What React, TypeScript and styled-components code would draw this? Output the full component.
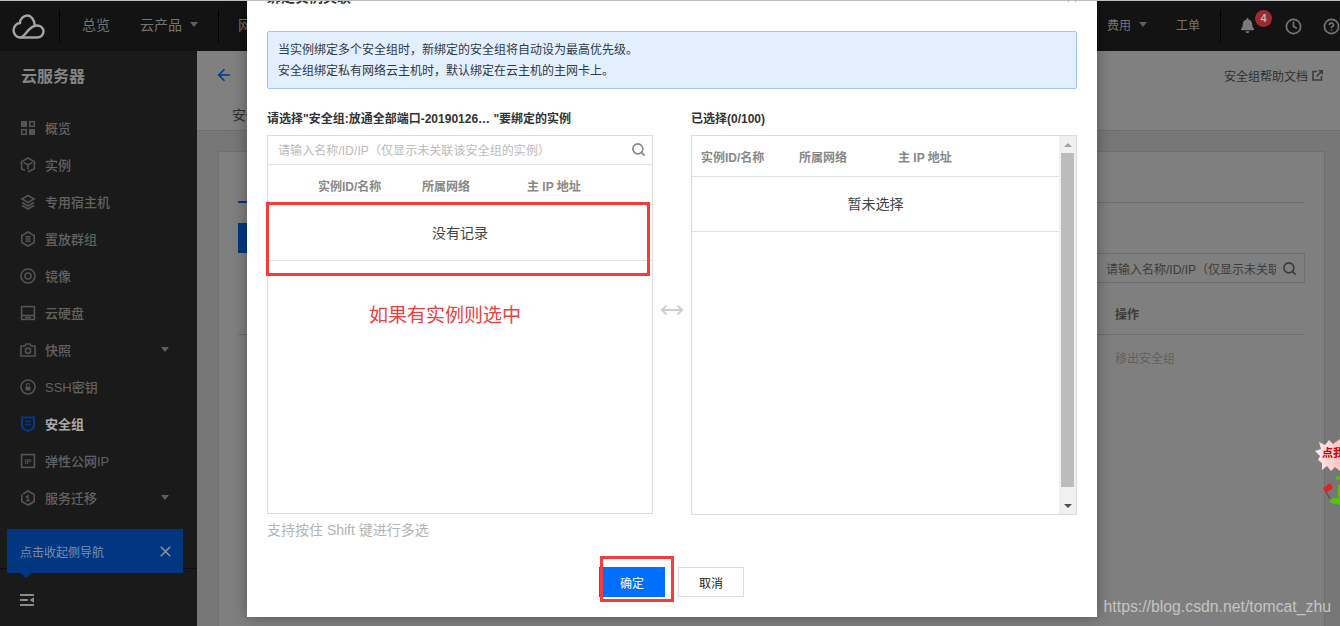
import React from "react";
import styled, { createGlobalStyle } from "styled-components";
import { Search, X, Clock, CircleHelp, ArrowLeft, MoveHorizontal } from "lucide-react";
import { FaBell } from "react-icons/fa";

const Global = createGlobalStyle`
  html, body { margin: 0; padding: 0; height: 100%; overflow: hidden; background: #777; }
  #root { height: 100%; }
  * { box-sizing: border-box; }
  body { font-family: "Liberation Sans", "Noto Sans CJK SC", sans-serif; font-size: 12px; }
`;

const Page = styled.div`
  position: relative;
  width: 1340px;
  height: 626px;
  overflow: hidden;
  display: flex;
  flex-direction: column;
  border-top: 1px solid #bdbdbd;
`;

/* ---------- top bar ---------- */
const TopBar = styled.header`
  height: 50px;
  flex: none;
  background: #131313;
  display: flex;
  align-items: center;
  color: #757575;
  padding-left: 12px;
`;
const Logo = styled.svg`
  width: 33px;
  height: 25px;
  flex: none;
  margin-right: 14px;
`;
const VRule = styled.span<{ $gap: number }>`
  width: 1px;
  height: 32px;
  background: #000;
  flex: none;
  margin-right: ${(p) => p.$gap}px;
`;
const NavItem = styled.span<{ $size?: number; $w: number }>`
  font-size: ${(p) => p.$size ?? 14}px;
  width: ${(p) => p.$w}px;
  flex: none;
  white-space: nowrap;
  display: flex;
  align-items: center;
  gap: 8px;
  padding-bottom: 4px;
`;
const Caret = styled.i`
  display: inline-block;
  width: 0;
  height: 0;
  border-left: 4px solid transparent;
  border-right: 4px solid transparent;
  border-top: 5px solid #5f5f5f;
`;
const BellWrap = styled.span`
  position: relative;
  display: flex;
  width: 15px;
  height: 17px;
  margin-right: 30px;
  color: #7a7a7a;
  flex: none;
`;
const Badge = styled.b`
  position: absolute;
  left: 15px;
  top: -8px;
  width: 17px;
  height: 17px;
  border-radius: 50%;
  background: #9c2a2e;
  color: #b5b5b5;
  font-size: 11px;
  font-weight: 700;
  line-height: 16px;
  text-align: center;
`;
const RoundIcon = styled.span`
  display: flex;
  color: #757575;
  flex: none;
  margin-right: 21px;
`;

/* ---------- body ---------- */
const Body = styled.div`
  flex: 1;
  display: flex;
  min-height: 0;
`;
const Sidebar = styled.aside`
  position: relative;
  width: 197px;
  flex: none;
  background: #1a1a1a;
  display: flex;
  flex-direction: column;
`;
const SideTitle = styled.div`
  height: 58px;
  padding: 16px 0 0 21px;
  font-size: 16px;
  line-height: 20px;
  font-weight: 700;
  color: #858585;
`;
const Menu = styled.nav`
  flex: 1;
`;
const MenuItem = styled.div<{ $active?: boolean }>`
  height: 37px;
  display: flex;
  align-items: center;
  padding: 0 28px 0 20px;
  font-size: 13px;
  font-weight: ${(p) => (p.$active ? 700 : 500)};
  color: ${(p) => (p.$active ? "#ababab" : "#626262")};
  svg.mi {
    width: 16px;
    height: 16px;
    flex: none;
    margin-right: 9px;
    color: ${(p) => (p.$active ? "#003a8c" : "#545454")};
  }
  span {
    flex: 1;
  }
`;
const SideFoot = styled.div`
  height: 58px;
  flex: none;
  border-top: 1px solid #0f0f0f;
  padding: 24px 0 0 20px;
  color: #8a8a8a;
  display: flex;
`;
const Tip = styled.div`
  position: absolute;
  left: 7px;
  top: 478px;
  width: 176px;
  height: 44px;
  background: #003780;
  color: #7f8ea3;
  display: flex;
  align-items: center;
  justify-content: space-between;
  padding: 0 9px 0 13px;
  font-size: 12px;
  &::after {
    content: "";
    position: absolute;
    left: 13px;
    bottom: -5px;
    border-left: 6px solid transparent;
    border-right: 6px solid transparent;
    border-top: 5px solid #003780;
  }
`;

/* ---------- main page behind the dialog ---------- */
const Main = styled.main`
  flex: 1;
  min-width: 0;
  background: #777;
  display: flex;
  flex-direction: column;
`;
const MainHead = styled.div`
  height: 80px;
  flex: none;
  background: #808080;
  border-bottom: 1px solid #6d6d6d;
  padding-left: 18px;
  color: #333;
`;
const TitleRow = styled.div`
  height: 48px;
  display: flex;
  align-items: center;
  justify-content: space-between;
  padding-right: 17px;
  color: #003a8c;
`;
const HelpLink = styled.span`
  font-size: 12px;
  color: #303030;
  display: flex;
  align-items: center;
  gap: 4px;
`;
const HeadTab = styled.div`
  font-size: 14px;
  color: #2f2f2f;
  padding-left: 17px;
  line-height: 20px;
  margin-top: 6px;
`;
const Card = styled.section`
  margin: 20px 15px 0 21px;
  flex: 1;
  background: #7f7f7f;
  border: solid #6f6f6f;
  border-width: 1px 1px 0 1px;
  padding: 0 19px;
`;
const CardTabs = styled.div`
  height: 51px;
  border-bottom: 1px solid #6d6d6d;
  position: relative;
`;
const CardTab = styled.i`
  position: absolute;
  left: 0;
  bottom: -1px;
  width: 90px;
  height: 2px;
  background: #003780;
`;
const Toolbar = styled.div`
  display: flex;
  justify-content: space-between;
  margin-top: 20px;
  height: 60px;
  align-items: flex-start;
`;
const PrimaryGhost = styled.div`
  width: 100px;
  height: 30px;
  background: #003780;
`;
const PageSearch = styled.div`
  width: 210px;
  height: 30px;
  margin-top: 30px;
  border: 1px solid #6d6d6d;
  padding: 0 7px 0 10px;
  display: flex;
  align-items: center;
  color: #3c3c3c;
  font-size: 12px;
  span {
    flex: 1;
    overflow: hidden;
    white-space: nowrap;
  }
  svg {
    flex: none;
    margin-left: 6px;
  }
`;
const PageTableHead = styled.div`
  height: 52px;
  border-bottom: 1px solid #6d6d6d;
  padding: 24px 0 0 877px;
  font-weight: 700;
  color: #3c3c3c;
  line-height: 16px;
`;
const PageTableRow = styled.div`
  padding: 16px 0 0 877px;
  color: #5f5f5f;
  line-height: 16px;
`;

/* ---------- dialog ---------- */
const Overlay = styled.div`
  position: absolute;
  inset: 0;
  padding-left: 247px;
`;
const Modal = styled.div`
  position: relative;
  width: 850px;
  height: 616px;
  background: #fff;
  box-shadow: 0 0 14px rgba(0, 0, 0, 0.35);
`;
const ModalClip = styled.div`
  position: absolute;
  inset: 0;
  overflow: hidden;
  padding: 0 20px;
`;
const ModalHead = styled.div`
  height: 30px;
  padding-bottom: 24px;
  display: flex;
  justify-content: space-between;
  align-items: flex-end;
  font-size: 14px;
  font-weight: 700;
  color: #333;
  line-height: 20px;
  svg {
    color: #888;
    margin-right: -2px;
    margin-bottom: 2px;
  }
`;
const Notice = styled.div`
  height: 58px;
  background: #e2effe;
  border: 1px solid #9ac6fb;
  border-radius: 2px;
  padding: 8px 10px;
  color: #2e3a48;
  font-size: 12px;
  line-height: 21px;
`;
const Transfer = styled.div`
  display: grid;
  grid-template-columns: 386px 38px 386px;
  margin-top: 21px;
`;
const PaneLabel = styled.div`
  font-size: 12px;
  font-weight: 700;
  color: #333;
  line-height: 18px;
  height: 25px;
  white-space: nowrap;
`;
const Pane = styled.div<{ $h: number }>`
  height: ${(p) => p.$h}px;
  border: 1px solid #dcdcdc;
  display: flex;
  flex-direction: column;
`;
const SearchRow = styled.div`
  height: 29px;
  flex: none;
  border-bottom: 1px solid #e2e2e2;
  display: flex;
  align-items: center;
  justify-content: space-between;
  padding: 0 6px 2px 10px;
  color: #bbb;
  font-size: 12px;
  letter-spacing: 0.08px;
  svg {
    color: #888;
  }
`;
const HeadRow = styled.div<{ $h: number; $cols: string; $inset?: number; $drop?: number }>`
  height: ${(p) => p.$h}px;
  flex: none;
  display: grid;
  grid-template-columns: ${(p) => p.$cols};
  padding-left: ${(p) => p.$inset ?? 0}px;
  padding-top: ${(p) => p.$drop ?? 0}px;
  align-items: center;
  border-bottom: 1px solid #e2e2e2;
  font-weight: 700;
  font-size: 12px;
  color: #888;
`;
const EmptyRow = styled.div<{ $h: number; $lift?: number }>`
  height: ${(p) => p.$h}px;
  flex: none;
  display: flex;
  align-items: center;
  justify-content: center;
  border-bottom: 1px solid #e2e2e2;
  font-size: 14px;
  color: #444;
  padding-bottom: ${(p) => p.$lift ?? 0}px;
`;
const RightBody = styled.div`
  flex: 1;
  min-width: 0;
  display: flex;
  flex-direction: column;
`;
const PaneRow = styled.div`
  flex: 1;
  display: flex;
  min-height: 0;
`;
const Scrollbar = styled.div`
  width: 17px;
  flex: none;
  background: #f0f0f0;
  display: flex;
  flex-direction: column;
  align-items: center;
`;
const ScrollBtn = styled.div<{ $down?: boolean }>`
  height: 17px;
  flex: none;
  display: flex;
  align-items: center;
  justify-content: center;
  &::before {
    content: "";
    border-left: 4px solid transparent;
    border-right: 4px solid transparent;
    ${(p) =>
      p.$down ? "border-top: 4px solid #505050;" : "border-bottom: 4px solid #a3a3a3;"}
  }
`;
const ScrollThumb = styled.div`
  width: 13px;
  height: 334px;
  background: #bcbcbc;
`;
const ScrollGap = styled.div`
  flex: 1;
`;
const ArrowCell = styled.div`
  grid-row: 2;
  grid-column: 2;
  color: #cfcfcf;
  display: flex;
  justify-content: center;
  align-items: center;
  padding: 0 0 30px 0;
`;
const Hint = styled.div`
  margin-top: 6px;
  font-size: 14px;
  line-height: 18px;
  color: #b4b4b4;
`;
const Footer = styled.div`
  position: absolute;
  left: 352px;
  top: 566px;
  display: flex;
  gap: 13px;
`;
const Btn = styled.button<{ $primary?: boolean }>`
  width: 66px;
  height: 30px;
  padding: 0;
  font: inherit;
  font-size: 12px;
  border: 1px solid ${(p) => (p.$primary ? "#006eff" : "#ddd")};
  background: ${(p) => (p.$primary ? "#006eff" : "#fff")};
  color: ${(p) => (p.$primary ? "#fff" : "#222")};
`;

/* ---------- annotations drawn over the screenshot ---------- */
const RedBox = styled.div<{ $l: number; $t: number; $w: number; $h: number }>`
  position: absolute;
  left: ${(p) => p.$l}px;
  top: ${(p) => p.$t}px;
  width: ${(p) => p.$w}px;
  height: ${(p) => p.$h}px;
  border: 3px solid #f93a3a;
  pointer-events: none;
`;
const RedNote = styled.div`
  position: absolute;
  left: 122px;
  top: 302px;
  font-size: 19px;
  line-height: 26px;
  color: #ee4040;
  white-space: nowrap;
`;
const Watermark = styled.div`
  position: absolute;
  right: 9px;
  bottom: 10px;
  font-size: 15.8px;
  line-height: 18px;
  color: #c4c4c4;
  white-space: nowrap;
`;
const Widget = styled.svg`
  position: absolute;
  right: 0;
  top: 437px;
  width: 30px;
  height: 72px;
`;

const I = (p: { children: React.ReactNode }) => (
  <svg className="mi" viewBox="0 0 16 16" fill="none" stroke="currentColor" strokeWidth="1.6">
    {p.children}
  </svg>
);

const Items: { label: string; icon: React.ReactNode; caret?: boolean; active?: boolean }[] = [
  {
    label: "概览",
    icon: (
      <I>
        <rect x="1" y="1" width="6" height="6" fill="currentColor" stroke="none" />
        <rect x="9.7" y="1.7" width="4.6" height="4.6" />
        <rect x="1.7" y="9.7" width="4.6" height="4.6" />
        <rect x="9" y="9" width="6" height="6" fill="currentColor" stroke="none" />
      </I>
    ),
  },
  {
    label: "实例",
    icon: (
      <I>
        <path d="M5 13.6 1.6 11.7V4.6L8 1l6.4 3.6v7L8 15" />
        <path d="M3.5 5.4 8 8l4.5-2.6M8 8v4.5" />
      </I>
    ),
  },
  {
    label: "专用宿主机",
    icon: (
      <I>
        <path d="M8 1.5 14 5 8 8.5 2 5z" />
        <path d="M2 8.5 8 12l6-3.5M2 11.5 8 15l6-3.5" />
      </I>
    ),
  },
  {
    label: "置放群组",
    icon: (
      <I>
        <path d="M8 1 14.2 4.5v7L8 15l-6.2-3.5v-7z" />
        <path d="M5.5 5.8h5M5.5 8h5M5.5 10.2h5" />
      </I>
    ),
  },
  {
    label: "镜像",
    icon: (
      <I>
        <circle cx="8" cy="8" r="7" />
        <circle cx="8" cy="8" r="3" />
      </I>
    ),
  },
  {
    label: "云硬盘",
    icon: (
      <I>
        <rect x="1.6" y="1.6" width="12.8" height="12.8" />
        <path d="M1.6 10.5h12.8" />
        <path d="M5 12.5h6" />
      </I>
    ),
  },
  {
    label: "快照",
    caret: true,
    icon: (
      <I>
        <path d="M1 4h4l1-2h4l1 2h4v10H1z" />
        <circle cx="8" cy="8.7" r="2.6" />
      </I>
    ),
  },
  {
    label: "SSH密钥",
    icon: (
      <I>
        <circle cx="8" cy="8" r="7" />
        <rect x="5.5" y="7.5" width="5" height="4" fill="currentColor" stroke="none" />
        <path d="M6.5 7.5V6a1.5 1.5 0 0 1 3 0" strokeWidth="1.2" />
      </I>
    ),
  },
  {
    label: "安全组",
    active: true,
    icon: (
      <I>
        <path d="M2 1.5h12v8.500c0 2.300-3 4-6 5-3-1-6-2.700-6-5z" strokeWidth="2" />
        <path d="M5 5.500h6M5 8.500h6" />
      </I>
    ),
  },
  {
    label: "弹性公网IP",
    icon: (
      <I>
        <rect x="1.6" y="1.6" width="12.8" height="12.8" />
        <text x="8" y="11" fontSize="7.5" fontWeight="700" textAnchor="middle" fill="currentColor" stroke="none" fontFamily="Liberation Sans">
          IP
        </text>
      </I>
    ),
  },
  {
    label: "服务迁移",
    caret: true,
    icon: (
      <I>
        <path d="M3 4 8 1l6.200 3.500v7L9.500 14.500" />
        <path d="M13 12 8 15l-6.200-3.500v-7" />
        <path d="M5.500 7.500 8 5.500v5M6 10.500h4" strokeWidth="1.3" />
      </I>
    ),
  },
];

export default function App() {
  return (
    <Page>
      <Global />
      <TopBar>
        <Logo viewBox="0 0 33 25" fill="none" stroke="#a4a4a4" strokeWidth="2.4">
          <path d="M8 23.500h17c3.600 0 6.500-2.600 6.500-6s-2.900-6-6.500-6c-.7 0-1.400.1-2 .3C22.200 5.600 19 1.500 15.500 1.500 11.500 1.500 8.200 4.800 8 9 4.200 9.300 1.500 12.700 1.500 16.300s2.800 7.200 6.500 7.200z" />
          <path d="M8 23.500c5 0 8-11 16-12" />
        </Logo>
        <VRule $gap={22} />
        <NavItem $w={58}>总览</NavItem>
        <NavItem $w={78}>
          云产品 <Caret />
        </NavItem>
        <VRule $gap={19} />
        <NavItem $w={869}>网络</NavItem>
        <NavItem $size={12} $w={69}>
          费用 <Caret />
        </NavItem>
        <NavItem $size={12} $w={44}>工单</NavItem>
        <VRule $gap={19} />
        <BellWrap>
          <FaBell size={15} />
          <Badge>4</Badge>
        </BellWrap>
        <RoundIcon>
          <Clock size={17} strokeWidth={2.4} />
        </RoundIcon>
        <RoundIcon>
          <CircleHelp size={17} strokeWidth={2.4} />
        </RoundIcon>
      </TopBar>
      <Body>
        <Sidebar>
          <SideTitle>云服务器</SideTitle>
          <Menu>
            {Items.map((it) => (
              <MenuItem key={it.label} $active={it.active}>
                {it.icon}
                <span>{it.label}</span>
                {it.caret && <Caret />}
              </MenuItem>
            ))}
          </Menu>
          <SideFoot>
            <svg width="15" height="14" viewBox="0 0 15 14" fill="currentColor">
              <rect x="0" y="1" width="14" height="2" />
              <rect x="0" y="6" width="8" height="2" />
              <rect x="0" y="11" width="14" height="2" />
              <path d="M14 4.200v5.600L9.500 7z" />
            </svg>
          </SideFoot>
          <Tip>
            点击收起侧导航
            <X size={17} strokeWidth={2.4} color="#8d8d8d" />
          </Tip>
        </Sidebar>
        <Main>
          <MainHead>
            <TitleRow>
              <ArrowLeft size={18} strokeWidth={2.2} />
              <HelpLink>
                安全组帮助文档
                <svg width="11" height="11" viewBox="0 0 11 11" fill="none" stroke="#3c3c3c" strokeWidth="1.6">
                  <path d="M5 1.500H1v8.500h8.500V6" />
                  <path d="M4.500 6.500 10 1M6.500 .8h3.700v3.700" />
                </svg>
              </HelpLink>
            </TitleRow>
            <HeadTab>安全组详情</HeadTab>
          </MainHead>
          <Card>
            <CardTabs>
              <CardTab />
            </CardTabs>
            <Toolbar>
              <PrimaryGhost />
              <PageSearch>
                <span>请输入名称/ID/IP（仅显示未关联该安全组的实例）</span>
                <Search size={15} strokeWidth={2.6} color="#3c3c3c" />
              </PageSearch>
            </Toolbar>
            <PageTableHead>操作</PageTableHead>
            <PageTableRow>移出安全组</PageTableRow>
          </Card>
        </Main>
      </Body>

      <Overlay>
        <Modal>
          <ModalClip>
            <ModalHead>
              绑定实例关联
              <X size={14} strokeWidth={1.6} />
            </ModalHead>
            <Notice>
              当实例绑定多个安全组时，新绑定的安全组将自动设为最高优先级。
              <br />
              安全组绑定私有网络云主机时，默认绑定在云主机的主网卡上。
            </Notice>
            <Transfer>
              <PaneLabel>请选择"安全组:放通全部端口-20190126… "要绑定的实例</PaneLabel>
              <span />
              <PaneLabel>已选择(0/100)</PaneLabel>
              <Pane $h={379}>
                <SearchRow>
                  请输入名称/ID/IP（仅显示未关联该安全组的实例）
                  <Search size={15} strokeWidth={2.6} />
                </SearchRow>
                <HeadRow $h={40} $cols="50px 104px 105px 1fr" $drop={2}>
                  <span />
                  <span>实例ID/名称</span>
                  <span>所属网络</span>
                  <span>主 IP 地址</span>
                </HeadRow>
                <EmptyRow $h={56} $lift={2}>没有记录</EmptyRow>
              </Pane>
              <ArrowCell>
                <MoveHorizontal size={24} strokeWidth={1.8} />
              </ArrowCell>
              <Pane $h={380}>
                <PaneRow>
                  <RightBody>
                    <HeadRow $h={41} $cols="98px 99px 1fr" $inset={9}>
                      <span>实例ID/名称</span>
                      <span>所属网络</span>
                      <span>主 IP 地址</span>
                    </HeadRow>
                    <EmptyRow $h={55} $lift={2}>暂未选择</EmptyRow>
                  </RightBody>
                  <Scrollbar>
                    <ScrollBtn />
                    <ScrollThumb />
                    <ScrollGap />
                    <ScrollBtn $down />
                  </Scrollbar>
                </PaneRow>
              </Pane>
            </Transfer>
            <Hint>支持按住 Shift 键进行多选</Hint>
            <Footer>
              <Btn $primary>确定</Btn>
              <Btn>取消</Btn>
            </Footer>
            <RedBox $l={19} $t={201} $w={384} $h={74} />
            <RedBox $l={353} $t={555} $w={74} $h={46} />
            <RedNote>如果有实例则选中</RedNote>
          </ModalClip>
        </Modal>
      </Overlay>

      <Widget viewBox="0 0 30 72">
        <defs>
          <linearGradient id="burst" x1="0" y1="0" x2="1" y2="0">
            <stop offset="0" stopColor="#ffeaea" />
            <stop offset="1" stopColor="#ffc4c4" />
          </linearGradient>
        </defs>
        <polygon
          points="9,4 15,7 19,2 23,6 30,1 30,33 25,29 21,33 17,28 12,32 12,25 8,22 10,18 5,13 11,11"
          fill="url(#burst)"
        />
        <text x="12" y="19" fontSize="11" fontWeight="700" fill="#c80000" fontFamily="Noto Sans CJK SC">
          点我
        </text>
        <path d="M14 50 20 61" stroke="#444" strokeWidth="1" />
        <polygon points="13,50 20,45 23,50 16,55" fill="#e02424" />
        <circle cx="28" cy="40" r="2" fill="#55c400" />
        <rect x="28" y="47" width="2" height="20" fill="#55c400" />
        <ellipse cx="25" cy="63" rx="5" ry="3" fill="#55c400" />
      </Widget>
      <Watermark>https://blog.csdn.net/tomcat_zhu</Watermark>
    </Page>
  );
}
